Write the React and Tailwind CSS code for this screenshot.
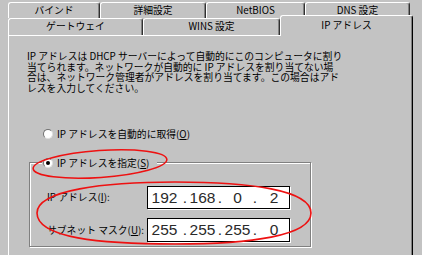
import React from "react";

const Tab = ({ className, children }) => {
  return (
    <div
      className={`flex items-center justify-center rounded-t-[3px] border-l border-t border-r border-l-white border-t-white border-r-[#303030] shadow-[inset_-1px_0_0_#808080] ${className}`}
    >
      {children}
    </div>
  );
};

const Radio = ({ checked }) => {
  return (
    <span className="flex h-[10px] w-[10px] items-center justify-center rounded-full border border-[#707070] border-b-[#e0e0e0] border-r-[#e0e0e0] bg-white">
      {checked && <span className="h-[4px] w-[4px] rounded-full bg-black" />}
    </span>
  );
};

const IpField = ({ parts }) => {
  return (
    <div className="flex h-full border border-black bg-white font-['Liberation_Sans',sans-serif] text-[15.5px] leading-none text-[#2a2a2a] shadow-[1px_1px_0_#fff]">
      <span className="flex w-[33px] items-center justify-center">{parts[0]}</span>
      <span className="flex w-[8px] items-center justify-center">.</span>
      <span className="flex w-[27px] items-center justify-center">{parts[1]}</span>
      <span className="flex w-[8px] items-center justify-center">.</span>
      <span className="flex w-[27px] items-center justify-center">{parts[2]}</span>
      <span className="flex w-[8px] items-center justify-center">.</span>
      <span className="flex w-[30px] items-center justify-center">{parts[3]}</span>
    </div>
  );
};

export default function App() {
  return (
    <div className="relative h-[255px] w-[422px] overflow-hidden bg-[#c3c3c3] pt-[2px] font-['Noto_Sans_CJK_JP',sans-serif] text-[9.8px] text-black">
      {/* back tab row */}
      <div className="ml-[8px] flex h-[16px]">
        <Tab className="w-[92px]">バインド</Tab>
        <Tab className="w-[106px]">詳細設定</Tab>
        <Tab className="w-[99px]">NetBIOS</Tab>
        <Tab className="w-[105px]">DNS 設定</Tab>
      </div>

      {/* front tab row */}
      <div className="ml-[8px] flex h-[17px] items-end">
        <Tab className="h-[17px] w-[135px] pb-[2px]">ゲートウェイ</Tab>
        <Tab className="h-[17px] w-[137px] pb-[2px]">WINS 設定</Tab>
        <div className="relative z-10 -mb-px flex h-[21px] w-[133px] items-center justify-center rounded-t-[3px] border-l border-t border-r border-l-white border-t-white border-r-black bg-[#c3c3c3] pb-[1px] shadow-[inset_-1px_0_0_#808080]">
          IP アドレス
        </div>
      </div>

      {/* page */}
      <div className="ml-[8px] h-[230px] w-[405px] border-l border-r border-t border-l-white border-r-black border-t-white pl-[18px] pt-[15px] shadow-[inset_-1px_0_0_#808080]">
        <p className="whitespace-nowrap leading-[10.5px]">
          IP アドレスは DHCP サーバーによって自動的にこのコンピュータに割り
          <br />
          当てられます。ネットワークが自動的に IP アドレスを割り当てない場
          <br />
          合は、ネットワーク管理者がアドレスを割り当てます。この場合はアド
          <br />
          レスを入力してください。
        </p>

        <div className="ml-[16px] mt-[35px] flex h-[12px] items-center gap-[4px]">
          <Radio />
          <span>
            IP アドレスを自動的に取得(<u>O</u>)
          </span>
        </div>

        {/* group box */}
        <div className="ml-[2px] mt-[22px] w-[282px] border border-[#808080] pb-[4px] shadow-[1px_1px_0_#fff,inset_1px_1px_0_#fff]">
          <div className="-mt-[7px] ml-[12px] flex h-[14px] w-fit items-center gap-[4px] bg-[#c3c3c3] pl-[1px] pr-[8px]">
            <Radio checked />
            <span>
              IP アドレスを指定(<u>S</u>)
            </span>
          </div>

          <div className="mt-[16px] grid grid-cols-[100px_143px] grid-rows-[23px_24px] gap-y-[9px] pl-[17px]">
            <div className="flex items-center">
              IP アドレス(<u>I</u>):
            </div>
            <IpField parts={["192", "168", "0", "2"]} />
            <div className="flex items-center">
              サブネット マスク(<u>U</u>):
            </div>
            <IpField parts={["255", "255", "255", "0"]} />
          </div>
        </div>
      </div>

      {/* red hand-drawn marks */}
      <svg
        className="pointer-events-none absolute inset-0"
        width="422"
        height="255"
        viewBox="0 0 422 255"
        fill="none"
      >
        <ellipse
          cx="100"
          cy="164"
          rx="67"
          ry="13.5"
          transform="rotate(-4 100 164)"
          stroke="#ee1111"
          strokeWidth="1.6"
        />
        <path
          d="M37 213 C37 190 105 182 175 182 C250 182 311 190 311 213 C311 236 250 244 175 244 C100 244 37 238 37 213 Z"
          stroke="#ee1111"
          strokeWidth="1.6"
        />
      </svg>
    </div>
  );
}
